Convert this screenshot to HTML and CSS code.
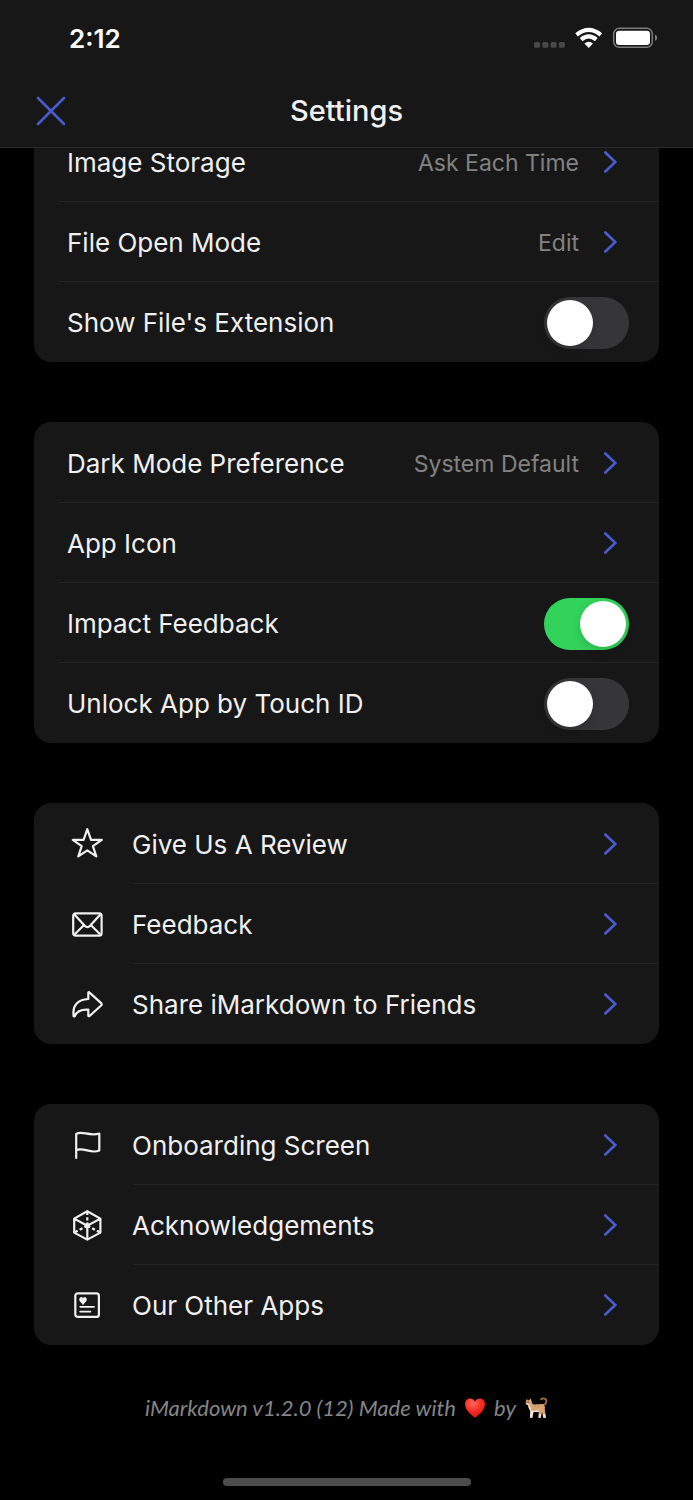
FILE: index.html
```html
<!DOCTYPE html>
<html lang="en">
<head>
<meta charset="utf-8">
<meta name="viewport" content="width=device-width, initial-scale=1">
<title>Settings</title>
<link rel="stylesheet" href="styles.css">
</head>
<body>
<svg class="defs" aria-hidden="true">
  <symbol id="chevron" viewBox="0 0 26 24"><path d="M2.3 1.5 L12.3 11 L2.3 20.5" fill="none" stroke="#4a5bcf" stroke-width="2.6" stroke-linecap="round" stroke-linejoin="miter"/></symbol>
</svg>
<header class="header">
  <div class="status">
    <span class="time">2:12</span>
    <svg class="status-icons" viewBox="534 26 124 24" aria-label="Wi-Fi connected, battery full" role="img">
      <g fill="#48484a"><rect x="534" y="42" width="6" height="5.8" rx="1.6"/><rect x="542.3" y="42" width="6" height="5.8" rx="1.6"/><rect x="550.6" y="42" width="6" height="5.8" rx="1.6"/><rect x="558.9" y="42" width="6" height="5.8" rx="1.6"/></g>
      <g fill="none" stroke="#fff" stroke-width="4.2"><path d="M576.6 34.8 Q588.7 24.8 600.8 34.8"/><path d="M581.1 39.6 Q588.7 33.2 596.3 39.6"/></g>
      <path d="M588.7 47.9 L584.4 43.6 Q588.7 39.8 593 43.6 Z" fill="#fff"/>
      <rect x="613.7" y="28.3" width="38.6" height="19" rx="5.5" fill="none" stroke="#7c7c7c" stroke-width="1.5"/>
      <rect x="616" y="30.8" width="34" height="14.2" rx="3.2" fill="#fff"/>
      <path d="M655 34.6 Q657.2 35.6 657.2 37.8 Q657.2 40 655 41 Z" fill="#7c7c7c"/>
    </svg>
  </div>
  <nav class="nav">
    <button class="close" aria-label="Close"><svg viewBox="0 0 30 30"><path d="M2 2 L28 28 M28 2 L2 28" stroke="#4a5bcf" stroke-width="2.6" stroke-linecap="round"/></svg></button>
    <h1 class="title">Settings</h1>
  </nav>
</header>
<main class="content">
  <section class="group group-scrolled">
    <button class="row"><span class="label">Image Storage</span><span class="value">Ask Each Time</span><svg class="chevron"><use href="#chevron"/></svg></button>
    <button class="row"><span class="label">File Open Mode</span><span class="value">Edit</span><svg class="chevron"><use href="#chevron"/></svg></button>
    <label class="row"><span class="label">Show File's Extension</span><input class="switch" type="checkbox" role="switch"></label>
  </section>
  <section class="group">
    <button class="row"><span class="label">Dark Mode Preference</span><span class="value">System Default</span><svg class="chevron"><use href="#chevron"/></svg></button>
    <button class="row"><span class="label">App Icon</span><svg class="chevron"><use href="#chevron"/></svg></button>
    <label class="row"><span class="label">Impact Feedback</span><input class="switch" type="checkbox" role="switch" checked></label>
    <label class="row"><span class="label">Unlock App by Touch ID</span><input class="switch" type="checkbox" role="switch"></label>
  </section>
  <section class="group group-icons">
    <button class="row">
      <svg class="icon" viewBox="0 0 40 40"><path d="M20.3 4.2 L24 14.9 L34.8 14.9 L25.9 21.2 L29.3 31.4 L20.3 25.4 L11.3 31.4 L14.7 21.2 L5.8 14.9 L16.6 14.9 Z"/></svg>
      <span class="label">Give Us A Review</span><svg class="chevron"><use href="#chevron"/></svg></button>
    <button class="row">
      <svg class="icon" viewBox="0 0 40 40"><rect x="6.2" y="8.3" width="28.4" height="22.4" rx="2.5"/><path d="M7 9 L17.5 20.6 Q20.4 23.6 23.3 20.6 L33.8 9 M7 30 L17 20 M33.8 30 L23.8 20"/></svg>
      <span class="label">Feedback</span><svg class="chevron"><use href="#chevron"/></svg></button>
    <button class="row">
      <svg class="icon" viewBox="0 0 40 40"><path d="M6.5 31 Q5 15 21.3 14 L21.3 7.6 Q21.8 6.8 22.6 7.6 L34.4 18.4 Q35.2 19.3 34.4 20.2 L22.6 31 Q21.7 31.6 21.3 30.8 L21.3 24.6 Q10.5 24 7.8 31 Q7 32 6.5 31 Z"/></svg>
      <span class="label">Share iMarkdown to Friends</span><svg class="chevron"><use href="#chevron"/></svg></button>
  </section>
  <section class="group group-icons">
    <button class="row">
      <svg class="icon" viewBox="0 0 40 40"><path d="M9.2 32 L9.2 8 C15 4.2 21 10.5 32.3 7.6 L32.3 24.5 C24 28.5 17 20.8 9.2 24"/></svg>
      <span class="label">Onboarding Screen</span><svg class="chevron"><use href="#chevron"/></svg></button>
    <button class="row">
      <svg class="icon" viewBox="0 0 40 40"><path d="M20.3 5.2 L33.4 12.6 L33.4 26.6 L20.3 33.6 L7.2 26.6 L7.2 12.6 Z M7.2 12.6 L20.3 19.8 L33.4 12.6 M20.3 19.8 V33.6"/><path d="M20.3 19.8 V6 M20.3 19.8 L7.6 26.3 M20.3 19.8 L33 26.3" stroke-dasharray="3.2 2.2" stroke-linecap="butt"/><circle cx="20.3" cy="19.6" r="1.6"/></svg>
      <span class="label">Acknowledgements</span><svg class="chevron"><use href="#chevron"/></svg></button>
    <button class="row">
      <svg class="icon" viewBox="0 0 40 40"><rect x="8.3" y="7.3" width="23.6" height="23.6" rx="2.5"/><path d="M13.2 20.8 H27 M13.2 25.6 H23.4" stroke-width="1.8"/><path d="M16 18 C14 16.3 12.7 15.4 12.7 13.4 C12.7 11 15.3 10.9 16 12.6 C16.7 10.9 19.3 11 19.3 13.4 C19.3 15.4 18 16.3 16 18 Z" fill="#f0f0f0" stroke-width="1"/></svg>
      <span class="label">Our Other Apps</span><svg class="chevron"><use href="#chevron"/></svg></button>
  </section>
</main>
<footer class="footer">
  <p class="credit"><span>iMarkdown v1.2.0 (12) Made with</span>
    <svg class="heart" viewBox="0 0 22 22" role="img" aria-label="love"><defs><radialGradient id="red" cx=".4" cy=".25" r=".8"><stop offset="0" stop-color="#ff6a5c"/><stop offset=".5" stop-color="#f52d25"/><stop offset="1" stop-color="#d8140f"/></radialGradient></defs><path d="M11 21 C8 18 1 13.5 1 7.2 C1 .6 8.8 -.2 11 4.8 C13.2 -.2 21 .6 21 7.2 C21 13.5 14 18 11 21 Z" fill="url(#red)"/></svg>
    <span>by</span>
    <svg class="cat" viewBox="0 0 24 24" role="img" aria-label="cat">
      <path d="M18.5 9 C23.5 8.5 23 3.4 20.5 2.6 Q18.5 2 17 3.4" fill="none" stroke="#a86f45" stroke-width="1.7" stroke-linecap="round"/>
      <path d="M2.5 3 L4.5 4.4 L6.8 2.4 L7.8 6 Q8.2 8.5 10 8.6 L18.5 8 Q21.5 9 20.8 13 L21.8 21.8 H19.3 L18 16 L16.7 21.8 H14.5 L14.8 15.5 L9.5 15.5 L8.3 21.8 H6 L6.4 15 Q4.2 12.5 4.3 9.3 L1.6 8 Z" fill="#d9a477"/>
      <path d="M1.6 8 L4 7.3 L5.7 9.5 L7.5 15 L15 14.5 L14.8 16 L9.5 16 L8.3 21.8 H6 L6.4 15 Q4.2 12.5 4.3 9.3 Z M19 18 L21.3 18 L21.8 21.8 H19.3 Z M15 18 H17.2 L16.7 21.8 H14.5 Z" fill="#f2e4d6"/>
      <path d="M11 9.2 L11.6 11.5 M14 9.2 L14.4 11.5" stroke="#c48d60" stroke-width="1"/><circle cx="4" cy="6.3" r=".7" fill="#35251a"/>
    </svg></p>
  <div class="home-bar"></div>
</footer>
</body>
</html>
```
FILE: styles.css
```css
* { box-sizing: border-box; }
body {
  margin: 0;
  min-height: 100vh;
  display: flex;
  flex-direction: column;
  background: #000;
  color: #f0f0f0;
  font-family: Inter, "Liberation Sans", sans-serif;
}
button { font: inherit; color: inherit; background: none; border: 0; padding: 0; text-align: left; cursor: pointer; }
.defs { display: none; }

.header {
  position: sticky;
  top: 0;
  z-index: 1;
  background: #171717;
  border-bottom: 1px solid #2b2b2b;
}
.status {
  display: flex;
  align-items: center;
  justify-content: space-between;
  height: 76px;
  padding: 0 35px 0 69px;
}
.time { color: #fff; font-size: 26px; font-weight: 600; }
.status-icons { width: 124px; height: 24px; }
.nav {
  display: grid;
  grid-template-columns: 1fr auto 1fr;
  align-items: center;
  height: 71px;
  padding: 0 36px 2px;
}
.close { width: 30px; height: 30px; }
.close svg { display: block; width: 30px; height: 30px; }
.title { margin: 0; font-size: 29px; font-weight: 500; }

.content {
  display: flex;
  flex-direction: column;
  gap: 60px;
  padding: 0 34px;
}
.group {
  display: flex;
  flex-direction: column;
  padding-bottom: 1px;
  border-radius: 17px;
  background: #171717;
}
.group-scrolled { margin-top: -27px; }
.row {
  --inset: 25px;
  display: flex;
  align-items: center;
  min-height: 80px;
  padding: 3px 30px 0 33px;
  cursor: pointer;
}
.row + .row {
  background: linear-gradient(#232323, #232323) no-repeat var(--inset) 0 / 100% 1px;
}
.group-icons .row { --inset: 99px; }
.label { flex: 1; font-size: 26px; line-height: 32px; }
.value { color: #828282; font-size: 23px; line-height: 32px; margin-right: 24px; }
.chevron { width: 26px; height: 24px; }
.icon {
  width: 40px;
  height: 40px;
  margin-right: 25px;
  fill: none;
  stroke: #f0f0f0;
  stroke-width: 2.2;
  stroke-linecap: round;
  stroke-linejoin: round;
}
.switch {
  appearance: none;
  width: 85px;
  height: 52px;
  margin: 0;
  padding: 3px;
  border-radius: 26px;
  background: #363638;
  cursor: pointer;
}
.switch::before {
  content: "";
  display: block;
  width: 46px;
  height: 46px;
  border-radius: 50%;
  background: #fff;
  box-shadow: 0 4px 10px rgba(0, 0, 0, .15);
}
.switch:checked { background: #32d35a; }
.switch:checked::before { margin-left: auto; }

.footer {
  flex: 1;
  display: flex;
  flex-direction: column;
  align-items: center;
  justify-content: space-between;
  padding: 49px 20px 14px;
}
.credit {
  display: flex;
  align-items: center;
  gap: 8px;
  margin: 0;
  color: #858585;
  font-family: Lato, "Open Sans", sans-serif;
  font-size: 22px;
  font-style: italic;
  line-height: 28px;
}
.heart { width: 22px; height: 22px; }
.cat { width: 24px; height: 24px; }
.home-bar { width: 248px; height: 8px; border-radius: 4px; background: #4d4d4d; }
```
